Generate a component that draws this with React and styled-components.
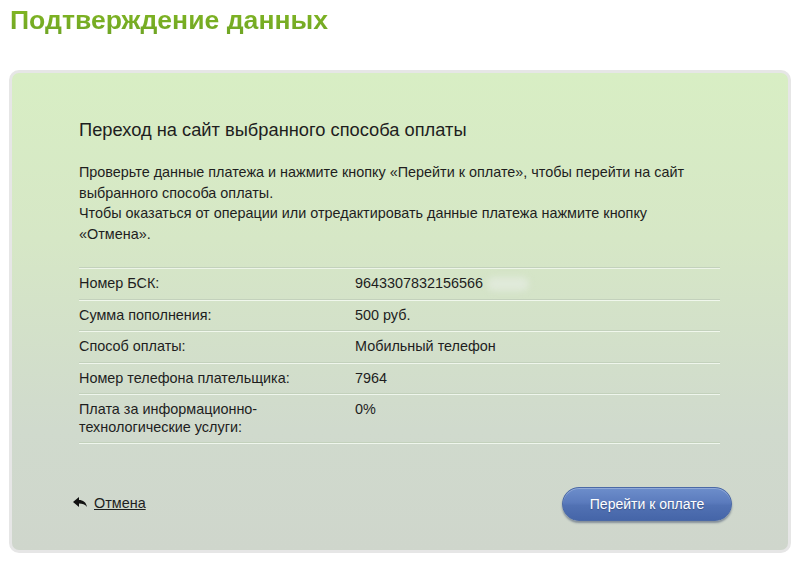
import React from "react";
import styled, { createGlobalStyle } from "styled-components";

const Global = createGlobalStyle`
  html, body { margin: 0; padding: 0; background: #fff; }
  body { font-family: "Liberation Sans", Arial, sans-serif; color: #1e1e1e; }
`;

const Page = styled.div`
  width: 800px;
  height: 565px;
  overflow: hidden;
`;

const Title = styled.h1`
  margin: 0;
  padding: 5px 0 0 10px;
  height: 70px;
  box-sizing: border-box;
  font-size: 26.6px;
  font-weight: bold;
  line-height: 30px;
  background: linear-gradient(180deg, #86bb22 0%, #6da325 55%, #4f8c30 100%);
  -webkit-background-clip: text;
  background-clip: text;
  color: transparent;
  width: fit-content;
`;

const Panel = styled.section`
  margin: 0 9px;
  border: 3px solid #e6e6e6;
  border-radius: 10px;
  background: linear-gradient(180deg, #d8eec4 0%, #d6e7c6 35%, #d0dacd 75%, #cfd6cc 100%);
  padding: 47px 68px 27px 67px;
  height: 483px;
  box-sizing: border-box;
`;

const Subtitle = styled.h2`
  margin: 0;
  font-size: 18.3px;
  font-weight: normal;
  line-height: 20px;
  color: #1e1e1e;
`;

const Text = styled.p`
  margin: 22px 0 0;
  font-size: 14.4px;
  line-height: 20.5px;
  color: #1e1e1e;
`;

const Table = styled.div`
  margin-top: 23px;
  border-top: 1px solid #c3d1bc;
  box-shadow: inset 0 1px 0 #edf5e8;
`;

const Row = styled.div`
  display: grid;
  grid-template-columns: 276px 1fr;
  padding: 7px 0 6px;
  border-bottom: 1px solid #c3d1bc;
  box-shadow: 0 1px 0 rgba(245, 250, 242, 0.85);
  font-size: 14.4px;
  line-height: 17.5px;
  color: #1e1e1e;
`;

const Label = styled.div`
  padding-right: 20px;
`;

const Value = styled.div``;

const Redact = styled.span`
  display: inline-block;
  vertical-align: middle;
  width: 42px;
  height: 14px;
  margin-left: 4px;
  border-radius: 8px;
  background: rgba(225, 234, 220, 0.9);
  filter: blur(3px);
`;

const Footer = styled.div`
  margin-top: 44px;
  display: flex;
  justify-content: space-between;
  align-items: center;
`;

const Back = styled.a`
  display: flex;
  align-items: center;
  gap: 7px;
  margin-left: -6px;
  margin-top: -3px;
  font-size: 14.4px;
  color: #1e1e1e;
  text-decoration: underline;
  cursor: pointer;
`;

const PayButton = styled.button`
  width: 170px;
  height: 34px;
  border-radius: 17px;
  border: 1px solid #4b69a6;
  background: linear-gradient(180deg, #6d8ecb 0%, #5b7bbd 45%, #5171b3 55%, #4565a8 100%);
  box-shadow: 0 2px 2px rgba(40, 55, 90, 0.45), inset 0 1px 0 rgba(255,255,255,0.25);
  color: #fff;
  font-family: "Liberation Sans", Arial, sans-serif;
  font-size: 14px;
  text-shadow: 0 1px 1px rgba(0,0,0,0.25);
  cursor: pointer;
  margin-right: -12px;
`;

const rows = [
  ["Номер БСК:", "9643307832156566", true],
  ["Сумма пополнения:", "500 руб."],
  ["Способ оплаты:", "Мобильный телефон"],
  ["Номер телефона плательщика:", "7964"],
  ["Плата за информационно-\nтехнологические услуги:", "0%"],
];

const BackIcon = () => (
  <svg width="14" height="11" viewBox="0 0 14 11" aria-hidden="true">
    <path d="M0 5 L6 0 L6 3 C10 3 13 5 14 10 C12 7 9.5 6.5 6 6.5 L6 10 Z" fill="#111" />
  </svg>
);

export default function App() {
  return (
    <Page>
      <Global />
      <Title>Подтверждение данных</Title>
      <Panel>
        <Subtitle>Переход на сайт выбранного способа оплаты</Subtitle>
        <Text>
          Проверьте данные платежа и нажмите кнопку «Перейти к оплате», чтобы перейти на сайт
          <br />
          выбранного способа оплаты.
          <br />
          Чтобы оказаться от операции или отредактировать данные платежа нажмите кнопку
          <br />
          «Отмена».
        </Text>
        <Table>
          {rows.map(([l, v, r]) => (
            <Row key={l}>
              <Label>
                {l.split("\n").map((s, i) => (
                  <React.Fragment key={i}>
                    {i > 0 && <br />}
                    {s}
                  </React.Fragment>
                ))}
              </Label>
              <Value>
                {v}
                {r && <Redact />}
              </Value>
            </Row>
          ))}
        </Table>
        <Footer>
          <Back>
            <BackIcon />
            Отмена
          </Back>
          <PayButton>Перейти к оплате</PayButton>
        </Footer>
      </Panel>
    </Page>
  );
}
